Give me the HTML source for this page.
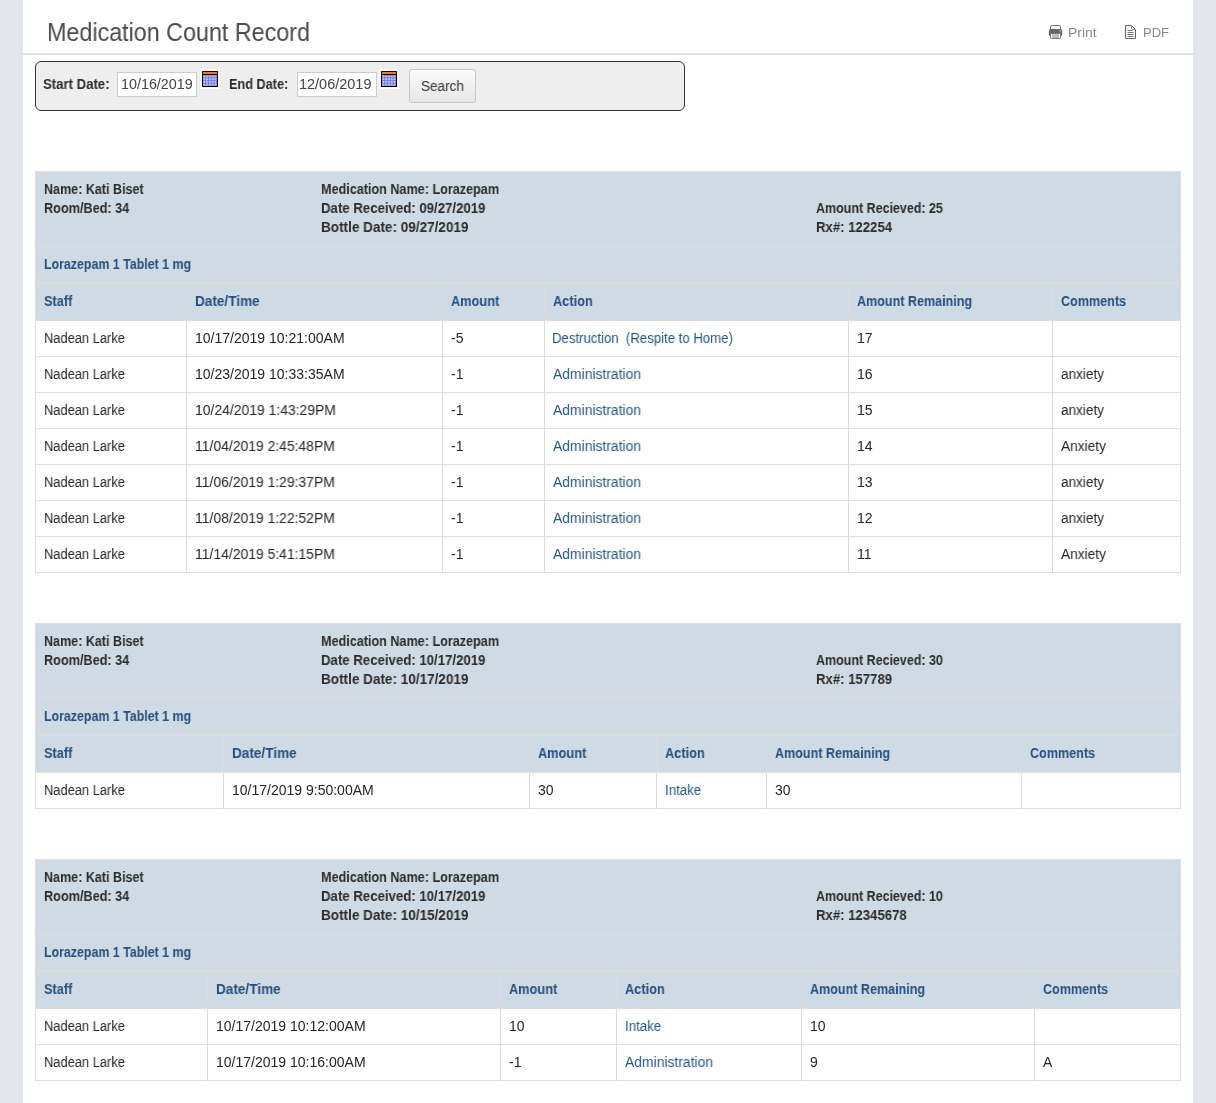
<!DOCTYPE html>
<html><head><meta charset="utf-8"><title>Medication Count Record</title>
<style>
*{margin:0;padding:0;box-sizing:border-box}
html,body{width:1216px;height:1103px;overflow:hidden}
body{background:#e3e6eb;font-family:"Liberation Sans", sans-serif;position:relative;color:#262626}
.t{position:absolute;white-space:nowrap;will-change:transform;font-size:14px;line-height:20px;margin-top:-15px;transform-origin:0 50%}
.b{font-weight:bold;color:#2b2b2b}
.hd{color:#264f7f;font-weight:bold}
.lk{color:#1f5688}
.title{font-size:25px;line-height:30px;margin-top:-24px;color:#4a4a4a}
.pr{font-size:13px;color:#888;margin-top:-14px}
.inp{color:#444}
.srch{color:#333}
.r{position:absolute}
</style></head>
<body>
<div class="r" style="left:23px;top:0;width:1170px;height:1103px;background:#fff"></div>
<div class="r" style="left:23px;top:53px;width:1170px;height:2px;background:#e0e4e9"></div>
<svg class="r" style="left:1048px;top:24px" width="16" height="16" viewBox="0 0 16 16">
<rect x="2.5" y="1.5" width="10" height="5" rx="1.5" fill="#fff" stroke="#777" stroke-width="1"/>
<rect x="1" y="5" width="13.2" height="7" rx="1.5" fill="#666"/>
<circle cx="12.2" cy="7" r="0.8" fill="#ccc"/>
<rect x="2.5" y="9.5" width="10" height="5" rx="1" fill="#fff" stroke="#777" stroke-width="1"/>
<line x1="4" y1="11" x2="11" y2="11" stroke="#888"/>
<line x1="4" y1="13" x2="11" y2="13" stroke="#777"/>
</svg>
<svg class="r" style="left:1124px;top:24px" width="14" height="16" viewBox="0 0 14 16">
<path d="M1.5 1.5 H7.5 L11.5 5.5 V14.5 H1.5 Z" fill="#fff" stroke="#666" stroke-width="1" stroke-linejoin="round"/>
<path d="M7.5 1.5 V5 L8 5.5 H11.5" fill="none" stroke="#999"/>
<line x1="3.5" y1="6.5" x2="8.5" y2="6.5" stroke="#777"/>
<line x1="3.5" y1="8.5" x2="9.5" y2="8.5" stroke="#777"/>
<line x1="3.5" y1="10.5" x2="9.5" y2="10.5" stroke="#666"/>
<line x1="3.5" y1="12.5" x2="9.5" y2="12.5" stroke="#777"/>
</svg>
<div class="r" style="left:35px;top:61px;width:650px;height:50px;border:1px solid #333;border-radius:6px;background:#eee"></div>
<div class="r" style="left:117px;top:72px;width:80px;height:25px;border:1px solid #ccc;background:#fff"></div>
<div class="r" style="left:297px;top:72px;width:80px;height:25px;border:1px solid #ccc;background:#fff"></div>
<div class="r" style="left:200px;top:69px;width:20px;height:20px;background:#fff"></div><svg class="r" style="left:202px;top:71px" width="16" height="16" viewBox="0 0 16 16">
<rect x="0" y="0" width="16" height="16" rx="0.6" fill="#000"/>
<rect x="1" y="1" width="14" height="2" fill="#ff7b00"/>
<rect x="1" y="4" width="14" height="11" fill="#6b74dc"/><rect x="1.3" y="4.40" width="2" height="2" fill="#b9c0ff"/><rect x="1.3" y="7.15" width="2" height="2" fill="#b9c0ff"/><rect x="1.3" y="9.90" width="2" height="2" fill="#b9c0ff"/><rect x="1.3" y="12.65" width="2" height="2" fill="#b9c0ff"/><rect x="4.1" y="4.40" width="2" height="2" fill="#b9c0ff"/><rect x="4.1" y="7.15" width="2" height="2" fill="#b9c0ff"/><rect x="4.1" y="9.90" width="2" height="2" fill="#b9c0ff"/><rect x="4.1" y="12.65" width="2" height="2" fill="#b9c0ff"/><rect x="6.9" y="4.40" width="2" height="2" fill="#b9c0ff"/><rect x="6.9" y="7.15" width="2" height="2" fill="#b9c0ff"/><rect x="6.9" y="9.90" width="2" height="2" fill="#b9c0ff"/><rect x="6.9" y="12.65" width="2" height="2" fill="#b9c0ff"/><rect x="9.7" y="4.40" width="2" height="2" fill="#b9c0ff"/><rect x="9.7" y="7.15" width="2" height="2" fill="#b9c0ff"/><rect x="9.7" y="9.90" width="2" height="2" fill="#b9c0ff"/><rect x="9.7" y="12.65" width="2" height="2" fill="#b9c0ff"/><rect x="12.5" y="4.40" width="2" height="2" fill="#b9c0ff"/><rect x="12.5" y="7.15" width="2" height="2" fill="#b9c0ff"/><rect x="12.5" y="9.90" width="2" height="2" fill="#b9c0ff"/><rect x="12.5" y="12.65" width="2" height="2" fill="#b9c0ff"/></svg>
<div class="r" style="left:379px;top:69px;width:20px;height:20px;background:#fff"></div><svg class="r" style="left:381px;top:71px" width="16" height="16" viewBox="0 0 16 16">
<rect x="0" y="0" width="16" height="16" rx="0.6" fill="#000"/>
<rect x="1" y="1" width="14" height="2" fill="#ff7b00"/>
<rect x="1" y="4" width="14" height="11" fill="#6b74dc"/><rect x="1.3" y="4.40" width="2" height="2" fill="#b9c0ff"/><rect x="1.3" y="7.15" width="2" height="2" fill="#b9c0ff"/><rect x="1.3" y="9.90" width="2" height="2" fill="#b9c0ff"/><rect x="1.3" y="12.65" width="2" height="2" fill="#b9c0ff"/><rect x="4.1" y="4.40" width="2" height="2" fill="#b9c0ff"/><rect x="4.1" y="7.15" width="2" height="2" fill="#b9c0ff"/><rect x="4.1" y="9.90" width="2" height="2" fill="#b9c0ff"/><rect x="4.1" y="12.65" width="2" height="2" fill="#b9c0ff"/><rect x="6.9" y="4.40" width="2" height="2" fill="#b9c0ff"/><rect x="6.9" y="7.15" width="2" height="2" fill="#b9c0ff"/><rect x="6.9" y="9.90" width="2" height="2" fill="#b9c0ff"/><rect x="6.9" y="12.65" width="2" height="2" fill="#b9c0ff"/><rect x="9.7" y="4.40" width="2" height="2" fill="#b9c0ff"/><rect x="9.7" y="7.15" width="2" height="2" fill="#b9c0ff"/><rect x="9.7" y="9.90" width="2" height="2" fill="#b9c0ff"/><rect x="9.7" y="12.65" width="2" height="2" fill="#b9c0ff"/><rect x="12.5" y="4.40" width="2" height="2" fill="#b9c0ff"/><rect x="12.5" y="7.15" width="2" height="2" fill="#b9c0ff"/><rect x="12.5" y="9.90" width="2" height="2" fill="#b9c0ff"/><rect x="12.5" y="12.65" width="2" height="2" fill="#b9c0ff"/></svg>
<div class="r" style="left:409px;top:69px;width:67px;height:34px;border:1px solid #c8c8c8;border-radius:3px;background:linear-gradient(#fafafa,#e6e6e6)"></div>
<div class="r" style="left:35px;top:171px;width:1146px;height:402px;background:#fff;border:1px solid #ddd"></div>
<div class="r" style="left:36px;top:172px;width:1144px;height:148px;background:#cfdbe4"></div>
<div class="r" style="left:36px;top:245px;width:1144px;height:2px;background:#dddbd9"></div>
<div class="r" style="left:36px;top:282px;width:1144px;height:2px;background:#dddbd9"></div>
<div class="r" style="left:36px;top:319px;width:1144px;height:2px;background:#dddbd9"></div>
<div class="r" style="left:36px;top:356px;width:1144px;height:1px;background:#ddd"></div>
<div class="r" style="left:36px;top:392px;width:1144px;height:1px;background:#ddd"></div>
<div class="r" style="left:36px;top:428px;width:1144px;height:1px;background:#ddd"></div>
<div class="r" style="left:36px;top:464px;width:1144px;height:1px;background:#ddd"></div>
<div class="r" style="left:36px;top:500px;width:1144px;height:1px;background:#ddd"></div>
<div class="r" style="left:36px;top:536px;width:1144px;height:1px;background:#ddd"></div>
<div class="r" style="left:186px;top:284px;width:1px;height:289px;background:#dadbdc"></div>
<div class="r" style="left:442px;top:284px;width:1px;height:289px;background:#dadbdc"></div>
<div class="r" style="left:544px;top:284px;width:1px;height:289px;background:#dadbdc"></div>
<div class="r" style="left:848px;top:284px;width:1px;height:289px;background:#dadbdc"></div>
<div class="r" style="left:1052px;top:284px;width:1px;height:289px;background:#dadbdc"></div>
<div class="r" style="left:35px;top:623px;width:1146px;height:186px;background:#fff;border:1px solid #ddd"></div>
<div class="r" style="left:36px;top:624px;width:1144px;height:148px;background:#cfdbe4"></div>
<div class="r" style="left:36px;top:697px;width:1144px;height:2px;background:#dddbd9"></div>
<div class="r" style="left:36px;top:734px;width:1144px;height:2px;background:#dddbd9"></div>
<div class="r" style="left:36px;top:771px;width:1144px;height:2px;background:#dddbd9"></div>
<div class="r" style="left:223px;top:736px;width:1px;height:73px;background:#dadbdc"></div>
<div class="r" style="left:529px;top:736px;width:1px;height:73px;background:#dadbdc"></div>
<div class="r" style="left:656px;top:736px;width:1px;height:73px;background:#dadbdc"></div>
<div class="r" style="left:766px;top:736px;width:1px;height:73px;background:#dadbdc"></div>
<div class="r" style="left:1021px;top:736px;width:1px;height:73px;background:#dadbdc"></div>
<div class="r" style="left:35px;top:859px;width:1146px;height:222px;background:#fff;border:1px solid #ddd"></div>
<div class="r" style="left:36px;top:860px;width:1144px;height:148px;background:#cfdbe4"></div>
<div class="r" style="left:36px;top:933px;width:1144px;height:2px;background:#dddbd9"></div>
<div class="r" style="left:36px;top:970px;width:1144px;height:2px;background:#dddbd9"></div>
<div class="r" style="left:36px;top:1007px;width:1144px;height:2px;background:#dddbd9"></div>
<div class="r" style="left:36px;top:1044px;width:1144px;height:1px;background:#ddd"></div>
<div class="r" style="left:207px;top:972px;width:1px;height:109px;background:#dadbdc"></div>
<div class="r" style="left:500px;top:972px;width:1px;height:109px;background:#dadbdc"></div>
<div class="r" style="left:616px;top:972px;width:1px;height:109px;background:#dadbdc"></div>
<div class="r" style="left:801px;top:972px;width:1px;height:109px;background:#dadbdc"></div>
<div class="r" style="left:1034px;top:972px;width:1px;height:109px;background:#dadbdc"></div>
<div id="t0" class="t title" style="left:47px;top:41px;transform:scaleX(0.9322)">Medication Count Record</div>
<div id="t1" class="t pr" style="left:1068px;top:37px;transform:scaleX(1.0703)">Print</div>
<div id="t2" class="t pr" style="left:1143px;top:37px;transform:scaleX(0.9906)">PDF</div>
<div id="t3" class="t b" style="left:43px;top:89px;transform:scaleX(0.9392)">Start Date:</div>
<div id="t4" class="t inp" style="left:121px;top:89px;transform:scaleX(1.0238)">10/16/2019</div>
<div id="t5" class="t b" style="left:229px;top:89px;transform:scaleX(0.9059)">End Date:</div>
<div id="t6" class="t inp" style="left:299px;top:89px;transform:scaleX(1.0339)">12/06/2019</div>
<div id="t7" class="t srch" style="left:421px;top:91px;transform:scaleX(0.9676)">Search</div>
<div id="t8" class="t b" style="left:44px;top:194px;transform:scaleX(0.8953)">Name: Kati Biset</div>
<div id="t9" class="t b" style="left:44px;top:213px;transform:scaleX(0.9060)">Room/Bed: 34</div>
<div id="t10" class="t b" style="left:321px;top:194px;transform:scaleX(0.9009)">Medication Name: Lorazepam</div>
<div id="t11" class="t b" style="left:321px;top:213px;transform:scaleX(0.9433)">Date Received: 09/27/2019</div>
<div id="t12" class="t b" style="left:321px;top:232px;transform:scaleX(0.9669)">Bottle Date: 09/27/2019</div>
<div id="t13" class="t b" style="left:816px;top:213px;transform:scaleX(0.8913)">Amount Recieved: 25</div>
<div id="t14" class="t b" style="left:816px;top:232px;transform:scaleX(0.9392)">Rx#: 122254</div>
<div id="t15" class="t hd" style="left:44px;top:269px;transform:scaleX(0.8846)">Lorazepam 1 Tablet 1 mg</div>
<div id="t16" class="t hd" style="left:44px;top:306px;transform:scaleX(0.9091)">Staff</div>
<div id="t17" class="t hd" style="left:195px;top:306px;transform:scaleX(0.9709)">Date/Time</div>
<div id="t18" class="t hd" style="left:451px;top:306px;transform:scaleX(0.9126)">Amount</div>
<div id="t19" class="t hd" style="left:553px;top:306px;transform:scaleX(0.9130)">Action</div>
<div id="t20" class="t hd" style="left:857px;top:306px;transform:scaleX(0.8967)">Amount Remaining</div>
<div id="t21" class="t hd" style="left:1061px;top:306px;transform:scaleX(0.8995)">Comments</div>
<div id="t22" class="t " style="left:44px;top:343px;transform:scaleX(0.9191)">Nadean Larke</div>
<div id="t23" class="t " style="left:195px;top:343px;transform:scaleX(1.0007)">10/17/2019 10:21:00AM</div>
<div id="t24" class="t " style="left:451px;top:343px;transform:scaleX(0.9700)">-5</div>
<div id="t25" class="t lk" style="left:552px;top:343px;transform:scaleX(0.9411)">Destruction&nbsp; (Respite to Home)</div>
<div id="t26" class="t " style="left:857px;top:343px;transform:scaleX(0.9700)">17</div>
<div id="t27" class="t " style="left:44px;top:379px;transform:scaleX(0.9191)">Nadean Larke</div>
<div id="t28" class="t " style="left:195px;top:379px;transform:scaleX(1.0007)">10/23/2019 10:33:35AM</div>
<div id="t29" class="t " style="left:451px;top:379px;transform:scaleX(0.9700)">-1</div>
<div id="t30" class="t lk" style="left:553px;top:379px;transform:scaleX(0.9919)">Administration</div>
<div id="t31" class="t " style="left:857px;top:379px;transform:scaleX(0.9700)">16</div>
<div id="t32" class="t " style="left:1061px;top:379px;transform:scaleX(0.9697)">anxiety</div>
<div id="t33" class="t " style="left:44px;top:415px;transform:scaleX(0.9191)">Nadean Larke</div>
<div id="t34" class="t " style="left:195px;top:415px;transform:scaleX(0.9943)">10/24/2019 1:43:29PM</div>
<div id="t35" class="t " style="left:451px;top:415px;transform:scaleX(0.9700)">-1</div>
<div id="t36" class="t lk" style="left:553px;top:415px;transform:scaleX(0.9919)">Administration</div>
<div id="t37" class="t " style="left:857px;top:415px;transform:scaleX(0.9700)">15</div>
<div id="t38" class="t " style="left:1061px;top:415px;transform:scaleX(0.9697)">anxiety</div>
<div id="t39" class="t " style="left:44px;top:451px;transform:scaleX(0.9191)">Nadean Larke</div>
<div id="t40" class="t " style="left:195px;top:451px;transform:scaleX(0.9943)">11/04/2019 2:45:48PM</div>
<div id="t41" class="t " style="left:451px;top:451px;transform:scaleX(0.9700)">-1</div>
<div id="t42" class="t lk" style="left:553px;top:451px;transform:scaleX(0.9919)">Administration</div>
<div id="t43" class="t " style="left:857px;top:451px;transform:scaleX(0.9700)">14</div>
<div id="t44" class="t " style="left:1061px;top:451px;transform:scaleX(0.9793)">Anxiety</div>
<div id="t45" class="t " style="left:44px;top:487px;transform:scaleX(0.9191)">Nadean Larke</div>
<div id="t46" class="t " style="left:195px;top:487px;transform:scaleX(0.9943)">11/06/2019 1:29:37PM</div>
<div id="t47" class="t " style="left:451px;top:487px;transform:scaleX(0.9700)">-1</div>
<div id="t48" class="t lk" style="left:553px;top:487px;transform:scaleX(0.9919)">Administration</div>
<div id="t49" class="t " style="left:857px;top:487px;transform:scaleX(0.9700)">13</div>
<div id="t50" class="t " style="left:1061px;top:487px;transform:scaleX(0.9697)">anxiety</div>
<div id="t51" class="t " style="left:44px;top:523px;transform:scaleX(0.9191)">Nadean Larke</div>
<div id="t52" class="t " style="left:195px;top:523px;transform:scaleX(0.9943)">11/08/2019 1:22:52PM</div>
<div id="t53" class="t " style="left:451px;top:523px;transform:scaleX(0.9700)">-1</div>
<div id="t54" class="t lk" style="left:553px;top:523px;transform:scaleX(0.9919)">Administration</div>
<div id="t55" class="t " style="left:857px;top:523px;transform:scaleX(0.9700)">12</div>
<div id="t56" class="t " style="left:1061px;top:523px;transform:scaleX(0.9697)">anxiety</div>
<div id="t57" class="t " style="left:44px;top:559px;transform:scaleX(0.9191)">Nadean Larke</div>
<div id="t58" class="t " style="left:195px;top:559px;transform:scaleX(0.9943)">11/14/2019 5:41:15PM</div>
<div id="t59" class="t " style="left:451px;top:559px;transform:scaleX(0.9700)">-1</div>
<div id="t60" class="t lk" style="left:553px;top:559px;transform:scaleX(0.9919)">Administration</div>
<div id="t61" class="t " style="left:857px;top:559px;transform:scaleX(0.9700)">11</div>
<div id="t62" class="t " style="left:1061px;top:559px;transform:scaleX(0.9793)">Anxiety</div>
<div id="t63" class="t b" style="left:44px;top:646px;transform:scaleX(0.8953)">Name: Kati Biset</div>
<div id="t64" class="t b" style="left:44px;top:665px;transform:scaleX(0.9060)">Room/Bed: 34</div>
<div id="t65" class="t b" style="left:321px;top:646px;transform:scaleX(0.9009)">Medication Name: Lorazepam</div>
<div id="t66" class="t b" style="left:321px;top:665px;transform:scaleX(0.9433)">Date Received: 10/17/2019</div>
<div id="t67" class="t b" style="left:321px;top:684px;transform:scaleX(0.9669)">Bottle Date: 10/17/2019</div>
<div id="t68" class="t b" style="left:816px;top:665px;transform:scaleX(0.8913)">Amount Recieved: 30</div>
<div id="t69" class="t b" style="left:816px;top:684px;transform:scaleX(0.9392)">Rx#: 157789</div>
<div id="t70" class="t hd" style="left:44px;top:721px;transform:scaleX(0.8846)">Lorazepam 1 Tablet 1 mg</div>
<div id="t71" class="t hd" style="left:44px;top:758px;transform:scaleX(0.9091)">Staff</div>
<div id="t72" class="t hd" style="left:232px;top:758px;transform:scaleX(0.9709)">Date/Time</div>
<div id="t73" class="t hd" style="left:538px;top:758px;transform:scaleX(0.9126)">Amount</div>
<div id="t74" class="t hd" style="left:665px;top:758px;transform:scaleX(0.9130)">Action</div>
<div id="t75" class="t hd" style="left:775px;top:758px;transform:scaleX(0.8967)">Amount Remaining</div>
<div id="t76" class="t hd" style="left:1030px;top:758px;transform:scaleX(0.8995)">Comments</div>
<div id="t77" class="t " style="left:44px;top:795px;transform:scaleX(0.9191)">Nadean Larke</div>
<div id="t78" class="t " style="left:232px;top:795px;transform:scaleX(0.9967)">10/17/2019 9:50:00AM</div>
<div id="t79" class="t " style="left:538px;top:795px;transform:scaleX(0.9700)">30</div>
<div id="t80" class="t lk" style="left:665px;top:795px;transform:scaleX(0.9500)">Intake</div>
<div id="t81" class="t " style="left:775px;top:795px;transform:scaleX(0.9700)">30</div>
<div id="t82" class="t b" style="left:44px;top:882px;transform:scaleX(0.8953)">Name: Kati Biset</div>
<div id="t83" class="t b" style="left:44px;top:901px;transform:scaleX(0.9060)">Room/Bed: 34</div>
<div id="t84" class="t b" style="left:321px;top:882px;transform:scaleX(0.9009)">Medication Name: Lorazepam</div>
<div id="t85" class="t b" style="left:321px;top:901px;transform:scaleX(0.9433)">Date Received: 10/17/2019</div>
<div id="t86" class="t b" style="left:321px;top:920px;transform:scaleX(0.9669)">Bottle Date: 10/15/2019</div>
<div id="t87" class="t b" style="left:816px;top:901px;transform:scaleX(0.8913)">Amount Recieved: 10</div>
<div id="t88" class="t b" style="left:816px;top:920px;transform:scaleX(0.9392)">Rx#: 12345678</div>
<div id="t89" class="t hd" style="left:44px;top:957px;transform:scaleX(0.8846)">Lorazepam 1 Tablet 1 mg</div>
<div id="t90" class="t hd" style="left:44px;top:994px;transform:scaleX(0.9091)">Staff</div>
<div id="t91" class="t hd" style="left:216px;top:994px;transform:scaleX(0.9709)">Date/Time</div>
<div id="t92" class="t hd" style="left:509px;top:994px;transform:scaleX(0.9126)">Amount</div>
<div id="t93" class="t hd" style="left:625px;top:994px;transform:scaleX(0.9130)">Action</div>
<div id="t94" class="t hd" style="left:810px;top:994px;transform:scaleX(0.8967)">Amount Remaining</div>
<div id="t95" class="t hd" style="left:1043px;top:994px;transform:scaleX(0.8995)">Comments</div>
<div id="t96" class="t " style="left:44px;top:1031px;transform:scaleX(0.9191)">Nadean Larke</div>
<div id="t97" class="t " style="left:216px;top:1031px;transform:scaleX(1.0007)">10/17/2019 10:12:00AM</div>
<div id="t98" class="t " style="left:509px;top:1031px;transform:scaleX(0.9700)">10</div>
<div id="t99" class="t lk" style="left:625px;top:1031px;transform:scaleX(0.9500)">Intake</div>
<div id="t100" class="t " style="left:810px;top:1031px;transform:scaleX(0.9700)">10</div>
<div id="t101" class="t " style="left:44px;top:1067px;transform:scaleX(0.9191)">Nadean Larke</div>
<div id="t102" class="t " style="left:216px;top:1067px;transform:scaleX(1.0007)">10/17/2019 10:16:00AM</div>
<div id="t103" class="t " style="left:509px;top:1067px;transform:scaleX(0.9700)">-1</div>
<div id="t104" class="t lk" style="left:625px;top:1067px;transform:scaleX(0.9919)">Administration</div>
<div id="t105" class="t " style="left:810px;top:1067px;transform:scaleX(0.9700)">9</div>
<div id="t106" class="t " style="left:1043px;top:1067px;transform:scaleX(0.9500)">A</div>
</body></html>
